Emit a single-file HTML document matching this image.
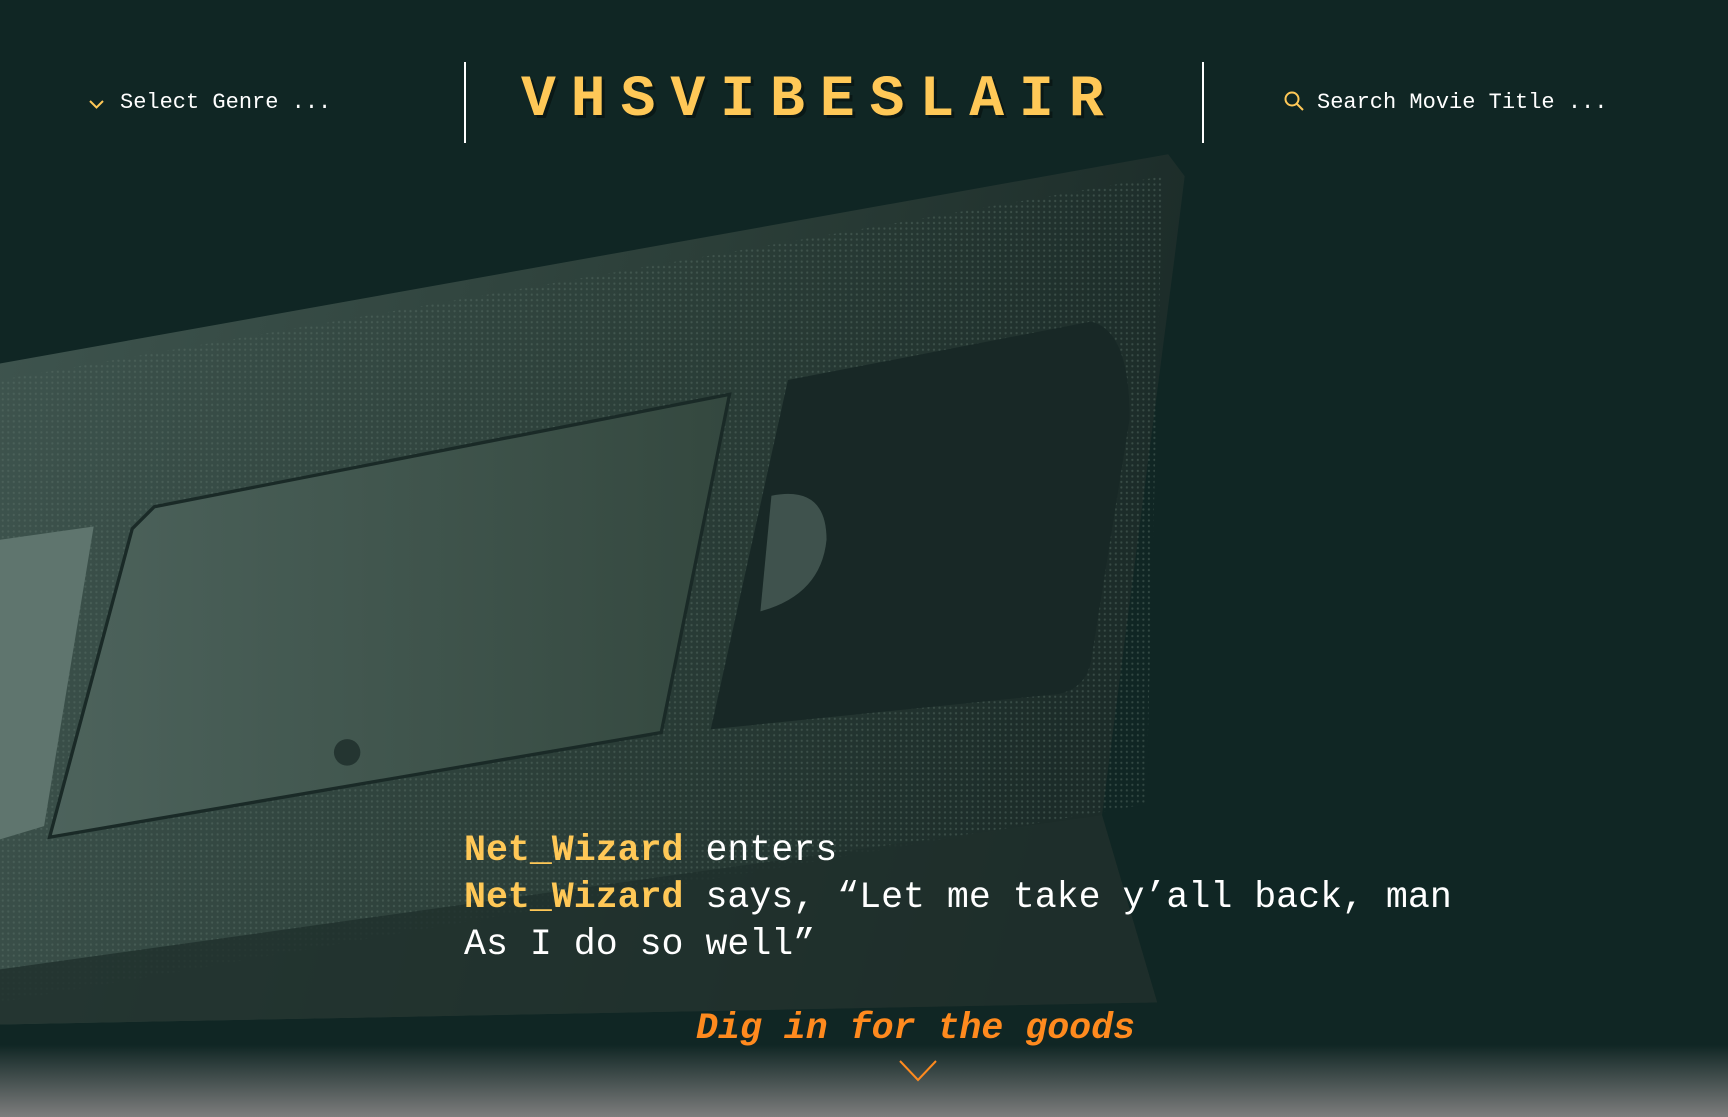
<!DOCTYPE html>
<html><head><meta charset="utf-8"><style>
html,body{margin:0;padding:0}
body{width:1728px;height:1117px;overflow:hidden;background:#102624;position:relative;font-family:"Liberation Mono","DejaVu Sans Mono",monospace}
svg.bg{position:absolute;left:0;top:0}
.abs{position:absolute;white-space:nowrap}
.nav{font-size:22px;color:#fff;top:90px}
.div{position:absolute;width:2px;background:#fff;top:62px;height:81px}
.logo{left:521px;top:72px;font-size:58px;font-weight:bold;color:#ffc857;letter-spacing:15px;line-height:58px;text-shadow:3px 3px 0 #0a1816}
.q{left:464px;top:827px;font-size:36.6px;line-height:47px;color:#fff}
.y{color:#ffc857;font-weight:bold}
.dig{left:696px;top:1008px;font-size:36.6px;font-weight:bold;font-style:italic;color:#ff8a1e}
.fade{position:absolute;left:0;right:0;top:1045px;height:72px;background:linear-gradient(rgba(130,130,130,0),#7d7d7d)}
</style></head><body>
<svg class="bg" width="1728" height="1117" viewBox="0 0 1568 1014" preserveAspectRatio="none">
<defs>
<linearGradient id="body" x1="0" y1="0" x2="1" y2="0.2"><stop offset="0" stop-color="#3f554f"/><stop offset="0.6" stop-color="#2b3e38"/><stop offset="1" stop-color="#1c2c29"/></linearGradient>
<linearGradient id="lab" x1="0" y1="0" x2="1" y2="0"><stop offset="0" stop-color="#4d635c"/><stop offset="1" stop-color="#34483f"/></linearGradient>
<pattern id="dots" width="5" height="5" patternUnits="userSpaceOnUse"><circle cx="2.5" cy="2.5" r="1" fill="#5c7169" opacity="0.45"/></pattern>
</defs>
<polygon points="0,330 1060,140 1075,160 1065,240 1000,740 1050,910 0,930" fill="url(#body)"/>
<polygon points="0,345 1055,160 1040,730 0,910" fill="url(#dots)"/>
<polygon points="0,930 1050,910 1000,740 0,880" fill="#1f302c" opacity="0.8"/>
<polygon points="140,460 662,358 600,665 45,760 120,480" fill="url(#lab)"/>
<polygon points="140,460 662,358 600,665 45,760 120,480" fill="none" stroke="#1a2a27" stroke-width="3"/>
<polygon points="0,490 85,478 40,750 0,762" fill="#5f756e"/>
<path d="M715,345 L990,292 Q1025,300 1025,380 L990,600 Q985,625 960,630 L645,662 Z" fill="#182826"/>
<path d="M700,450 Q750,440 750,490 Q745,540 690,555 Z" fill="#3f524d"/>
<circle cx="315" cy="683" r="12" fill="#243531"/>
</svg>
<div class="abs nav" style="left:88px;top:92px"><svg width="17" height="12" viewBox="0 0 17 12"><path d="M2 3 L8.5 9.5 L15 3" fill="none" stroke="#ffc857" stroke-width="2"/></svg></div>
<div class="abs nav" style="left:120px">Select Genre ...</div>
<div class="div" style="left:464px"></div>
<div class="abs logo">VHSVIBESLAIR</div>
<div class="div" style="left:1202px"></div>
<div class="abs nav" style="left:1283px;top:90px"><svg width="22" height="22" viewBox="0 0 22 22"><circle cx="9" cy="9" r="6.5" fill="none" stroke="#ffc857" stroke-width="2"/><path d="M14 14 L20 20" stroke="#ffc857" stroke-width="2"/></svg></div>
<div class="abs nav" style="left:1317px">Search Movie Title ...</div>
<div class="abs q"><span class="y">Net_Wizard</span> enters<br><span class="y">Net_Wizard</span> says, “Let me take y’all back, man<br>As I do so well”</div>
<div class="fade"></div>
<div class="abs dig">Dig in for the goods</div>
<svg class="abs" style="left:899px;top:1060px" width="38" height="22" viewBox="0 0 38 22"><path d="M1 1 L19 20 L37 1" fill="none" stroke="#ff8a1e" stroke-width="2"/></svg>
</body></html>
